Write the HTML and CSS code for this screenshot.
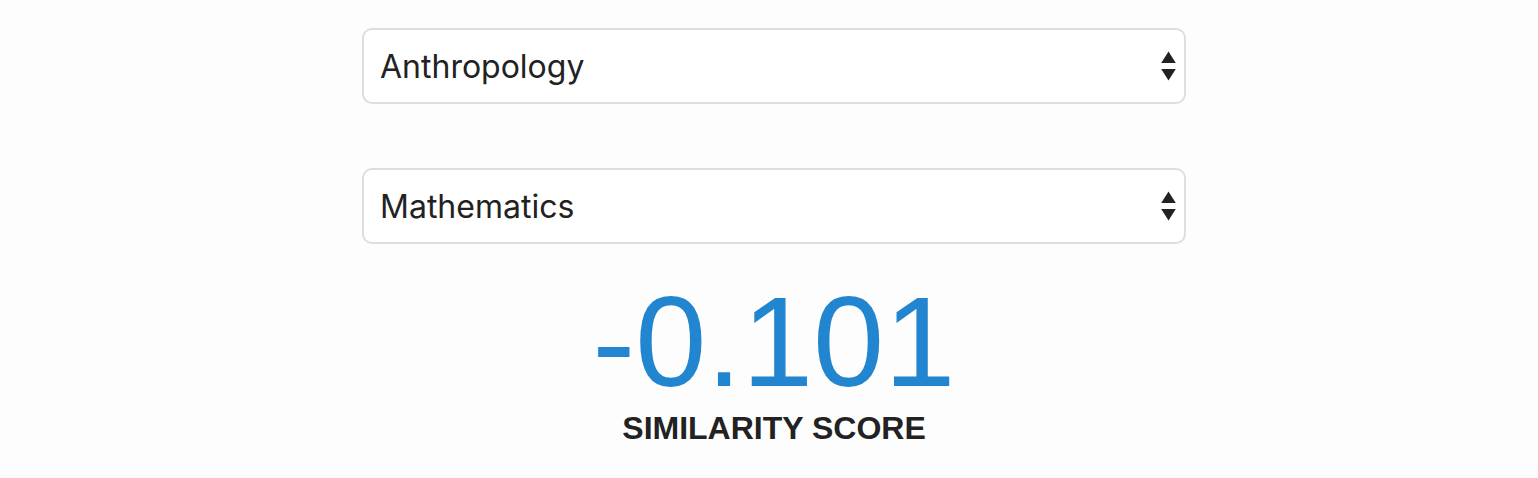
FILE: index.html
```html
<!DOCTYPE html>
<html lang="en">
<head>
<meta charset="utf-8">
<meta name="viewport" content="width=device-width, initial-scale=1">
<title>Similarity Score</title>
<link rel="stylesheet" href="styles.css">
</head>
<body>
<main class="comparison">
  <div class="field">
    <select class="field-select" aria-label="First subject">
      <option selected>Anthropology</option>
      <option>Mathematics</option>
    </select>
    <svg class="field-arrows" viewBox="0 0 16 30" aria-hidden="true"><path d="M7.5 .5 14.8 12H.2zM7.5 29.500 .2 18H14.800z"/></svg>
  </div>
  <div class="field">
    <select class="field-select" aria-label="Second subject">
      <option>Anthropology</option>
      <option selected>Mathematics</option>
    </select>
    <svg class="field-arrows" viewBox="0 0 16 30" aria-hidden="true"><path d="M7.5 .5 14.8 12H.2zM7.5 29.500 .2 18H14.800z"/></svg>
  </div>
  <div class="score">
    <div class="score-value">-0.101</div>
    <div class="score-label">Similarity Score</div>
  </div>
</main>
</body>
</html>
```
FILE: styles.css
```css
* {
  box-sizing: border-box;
}

body {
  margin: 0;
  padding: 28px 0 32px 10px;
  background: #fdfdfd;
  color: #222;
}

.comparison {
  display: flex;
  flex-direction: column;
  gap: 64px;
  max-width: 824px;
  margin: 0 auto;
}

.field {
  position: relative;
}

.field-select {
  display: block;
  width: 100%;
  height: 76px;
  padding: 0 48px 0 16px;
  border: 2px solid #dedede;
  border-radius: 10px;
  appearance: none;
  background: #fff;
  color: #222;
  font: 32px Inter, sans-serif;
}

.field-arrows {
  position: absolute;
  top: 23px;
  right: 9px;
  width: 16px;
  height: 30px;
  fill: #222;
  pointer-events: none;
}

.score {
  margin-top: -30px;
  text-align: center;
  font-family: "Liberation Sans", Arial, sans-serif;
}

.score-value {
  color: #2185d0;
  font-size: 128px;
  line-height: 128px;
}

.score-label {
  margin-top: 6px;
  font-size: 32px;
  font-weight: bold;
  line-height: 32px;
  text-transform: uppercase;
}
```
